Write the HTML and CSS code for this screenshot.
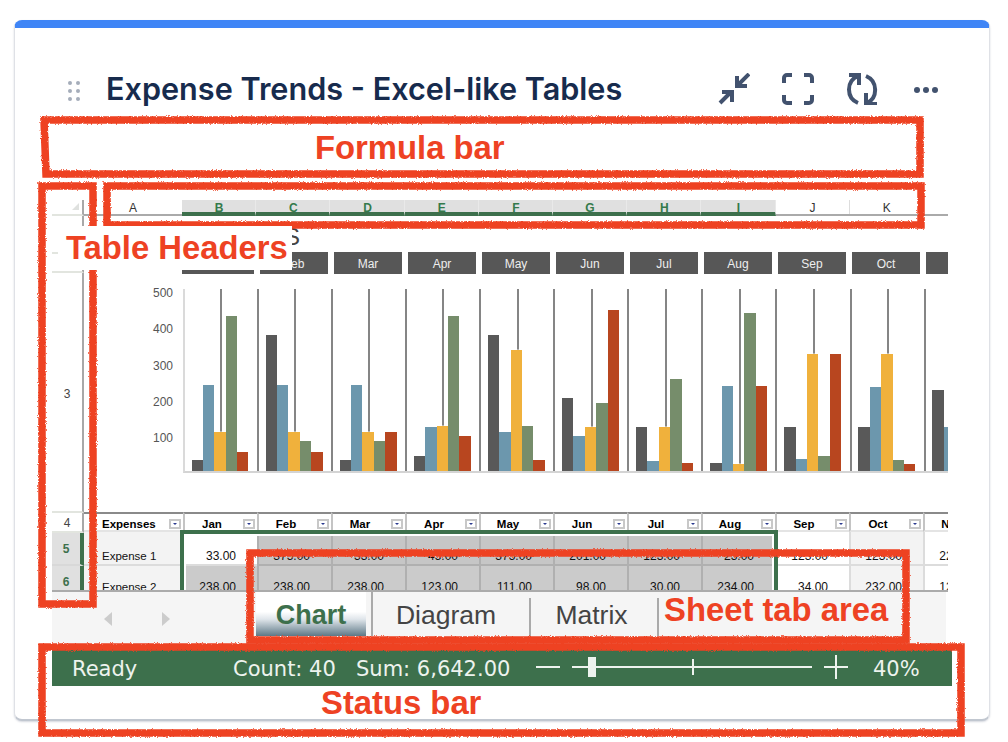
FILE: index.html
```html
<!DOCTYPE html>
<html lang="en">
<head>
<meta charset="utf-8">
<title>Expense Trends - Excel-like Tables</title>
<link rel="stylesheet" href="styles.css">
</head>
<body>
<main class="card">
  <header class="card-head">
    <svg class="handle" width="12" height="20" viewBox="0 0 12 20"><g fill="#a5adba"><circle cx="2" cy="2" r="2"/><circle cx="10" cy="2" r="2"/><circle cx="2" cy="10" r="2"/><circle cx="10" cy="10" r="2"/><circle cx="2" cy="18" r="2"/><circle cx="10" cy="18" r="2"/></g></svg>
    <h1 class="title">Expense Trends - Excel-like Tables</h1>
    <div class="tools">
      <svg class="tool" viewBox="0 0 32 32"><path d="M2 30L13 19M4 19H14V29M31 1L20 12M19 3V13H29"/></svg>
      <svg class="tool" viewBox="0 0 32 32"><path d="M2 10V5a3 3 0 0 1 3-3h5M22 2h5a3 3 0 0 1 3 3v5M30 22v5a3 3 0 0 1-3 3h-5M10 30H5a3 3 0 0 1-3-3v-5"/></svg>
      <svg class="tool" viewBox="0 0 32 32"><path d="M12 3C0 8 0 25 12 30M13 12V2H3M20 3C32 8 32 25 21 30M20 20V31H31"/></svg>
      <svg class="tool" viewBox="0 0 32 32"><g class="fill"><circle cx="7" cy="17" r="3"/><circle cx="16" cy="17" r="3"/><circle cx="25" cy="17" r="3"/></g></svg>
    </div>
  </header>
  <div class="formula-bar"></div>
  <section class="sheet">
    <div class="row-heads">
      <div class="rh rh-corner"><span class="corner-mark"></span></div>
      <div class="rh rh-1"></div>
      <div class="rh rh-2"></div>
      <div class="rh rh-3">3</div>
      <div class="rh rh-4">4</div>
      <div class="rh rh-sel rh-5">5</div>
      <div class="rh rh-sel rh-6">6</div>
    </div>
    <div class="cells">
      <div class="col-heads">
        <div class="ch ch-a">A</div>
        <div class="ch on">B</div><div class="ch on">C</div><div class="ch on">D</div><div class="ch on">E</div>
        <div class="ch on">F</div><div class="ch on">G</div><div class="ch on">H</div><div class="ch on">I</div>
        <div class="ch">J</div><div class="ch">K</div>
      </div>
      <div class="chart-title">S</div>
      <div class="months">
        <div class="month month-first">Jan</div><div class="month">Feb</div><div class="month">Mar</div><div class="month">Apr</div>
        <div class="month">May</div><div class="month">Jun</div><div class="month">Jul</div><div class="month">Aug</div>
        <div class="month">Sep</div><div class="month">Oct</div><div class="month">Nov</div>
      </div>
      <div class="chart">
        <div class="ticks"><span>500</span><span>400</span><span>300</span><span>200</span><span>100</span></div>
        <div class="plot">
          <div class="group"><i class="b k" style="height:11px"></i><i class="b u" style="height:86px"></i><i class="b o" style="height:39px"></i><i class="b g" style="height:155px"></i><i class="b r" style="height:19px"></i></div>
          <div class="group"><i class="b k" style="height:136px"></i><i class="b u" style="height:86px"></i><i class="b o" style="height:39px"></i><i class="b g" style="height:30px"></i><i class="b r" style="height:19px"></i></div>
          <div class="group"><i class="b k" style="height:11px"></i><i class="b u" style="height:86px"></i><i class="b o" style="height:39px"></i><i class="b g" style="height:30px"></i><i class="b r" style="height:39px"></i></div>
          <div class="group"><i class="b k" style="height:15px"></i><i class="b u" style="height:44px"></i><i class="b o" style="height:45px"></i><i class="b g" style="height:155px"></i><i class="b r" style="height:35px"></i></div>
          <div class="group"><i class="b k" style="height:136px"></i><i class="b u" style="height:39px"></i><i class="b o" style="height:121px"></i><i class="b g" style="height:45px"></i><i class="b r" style="height:11px"></i></div>
          <div class="group"><i class="b k" style="height:73px"></i><i class="b u" style="height:35px"></i><i class="b o" style="height:44px"></i><i class="b g" style="height:68px"></i><i class="b r" style="height:161px"></i></div>
          <div class="group"><i class="b k" style="height:44px"></i><i class="b u" style="height:10px"></i><i class="b o" style="height:44px"></i><i class="b g" style="height:92px"></i><i class="b r" style="height:8px"></i></div>
          <div class="group"><i class="b k" style="height:8px"></i><i class="b u" style="height:85px"></i><i class="b o" style="height:7px"></i><i class="b g" style="height:158px"></i><i class="b r" style="height:85px"></i></div>
          <div class="group"><i class="b k" style="height:44px"></i><i class="b u" style="height:12px"></i><i class="b o" style="height:117px"></i><i class="b g" style="height:15px"></i><i class="b r" style="height:117px"></i></div>
          <div class="group"><i class="b k" style="height:44px"></i><i class="b u" style="height:84px"></i><i class="b o" style="height:117px"></i><i class="b g" style="height:11px"></i><i class="b r" style="height:7px"></i></div>
          <div class="group"><i class="b k" style="height:81px"></i><i class="b u" style="height:44px"></i></div>
        </div>
      </div>
      <div class="table">
        <div class="th th-first"><span class="th-text">Expenses</span><span class="filter"></span></div>
        <div class="th"><span class="th-text">Jan</span><span class="filter"></span></div>
        <div class="th"><span class="th-text">Feb</span><span class="filter"></span></div>
        <div class="th"><span class="th-text">Mar</span><span class="filter"></span></div>
        <div class="th"><span class="th-text">Apr</span><span class="filter"></span></div>
        <div class="th"><span class="th-text">May</span><span class="filter"></span></div>
        <div class="th"><span class="th-text">Jun</span><span class="filter"></span></div>
        <div class="th"><span class="th-text">Jul</span><span class="filter"></span></div>
        <div class="th"><span class="th-text">Aug</span><span class="filter"></span></div>
        <div class="th"><span class="th-text">Sep</span><span class="filter"></span></div>
        <div class="th"><span class="th-text">Oct</span><span class="filter"></span></div>
        <div class="th"><span class="th-text">Nov</span><span class="filter"></span></div>

        <div class="td r5 name">Expense 1</div>
        <div class="td r5">33.00</div>
        <div class="td r5 sel">375.00</div><div class="td r5 sel">33.00</div><div class="td r5 sel">45.00</div><div class="td r5 sel">375.00</div>
        <div class="td r5 sel">201.00</div><div class="td r5 sel">123.00</div><div class="td r5 sel">23.00</div>
        <div class="td r5">123.00</div><div class="td r5 alt">123.00</div><div class="td r5">225.00</div>

        <div class="td r6 name">Expense 2</div>
        <div class="td r6 sel">238.00</div><div class="td r6 sel">238.00</div><div class="td r6 sel">238.00</div><div class="td r6 sel">123.00</div>
        <div class="td r6 sel">111.00</div><div class="td r6 sel">98.00</div><div class="td r6 sel">30.00</div><div class="td r6 sel">234.00</div>
        <div class="td r6">34.00</div><div class="td r6 alt">232.00</div><div class="td r6">125.00</div>

        <div class="selection"></div>
      </div>
    </div>
  </section>
  <nav class="tabbar">
    <div class="arrows"><span class="arrow arrow-l"></span><span class="arrow arrow-r"></span></div>
    <div class="tab tab-on">Chart</div>
    <div class="tab tab-diagram">Diagram</div>
    <div class="tab tab-matrix">Matrix</div>
  </nav>
  <footer class="status">
    <span class="st-ready">Ready</span>
    <span class="st-count">Count: 40</span>
    <span class="st-sum">Sum: 6,642.00</span>
    <span class="zoom-minus"></span>
    <span class="slider"><span class="slider-thumb"></span><span class="slider-tick"></span></span>
    <span class="zoom-plus"></span>
    <span class="st-zoom">40%</span>
  </footer>
</main>
<div class="notes">
  <svg class="scribble" width="1008" height="742" viewBox="0 0 1008 742">
    <defs>
      <filter id="rough" x="-5%" y="-5%" width="110%" height="110%">
        <feTurbulence type="fractalNoise" baseFrequency="1.2" numOctaves="2" seed="4"/>
        <feDisplacementMap in="SourceGraphic" scale="3"/>
      </filter>
    </defs>
    <g filter="url(#rough)" fill="none" stroke="#ee4223" stroke-width="7.5">
      <path d="M44 120H920V174H46Z"/>
      <path d="M107 186H921V225H107Z"/>
      <path d="M42 186H93V604H42Z"/>
      <path d="M250 553H906V640H250Z"/>
      <path d="M42 647H961V733H42Z"/>
    </g>
  </svg>
  <span class="note note-formula">Formula bar</span>
  <span class="note note-table">Table Headers</span>
  <span class="note note-tabs">Sheet tab area</span>
  <span class="note note-status">Status bar</span>
</div>
</body>
</html>
```
FILE: styles.css
```css
* { box-sizing: border-box; }
html, body { margin: 0; padding: 0; }
body {
  width: 1008px;
  height: 742px;
  overflow: hidden;
  position: relative;
  background: #fff;
  font-family: "Liberation Sans", Arial, sans-serif;
}
.card {
  width: 976px;
  height: 701px;
  margin: 20px 0 0 14px;
  background: #fff;
  border: 1px solid #dfe1e6;
  border-top: 8px solid #3f85f6;
  border-bottom: 2px solid #c1c7d0;
  border-radius: 8px;
  box-shadow: 0 1px 2px rgba(9, 30, 66, .18);
}
.card-head {
  height: 34px;
  margin-top: 44px;
  padding: 0 47px 0 53px;
  display: flex;
  align-items: center;
}
.handle { flex: none; margin-top: 4px; }
.title {
  margin: 0 0 0 26px;
  font: 600 30.6px/34px Inter, sans-serif;
  color: #172b4d;
  white-space: nowrap;
}
.tools { margin-left: auto; display: flex; gap: 32px; }
.tool {
  width: 32px;
  height: 32px;
  fill: none;
  stroke: #42526e;
  stroke-width: 4;
  stroke-linejoin: miter;
}
.tool .fill { fill: #42526e; stroke: none; }
.formula-bar { height: 94px; }

.sheet {
  width: 896px;
  height: 390px;
  margin-left: 37px;
  display: flex;
  overflow: hidden;
  color: #222;
  font-size: 12px;
}
.row-heads { flex: none; width: 32px; display: flex; flex-direction: column; }
.rh {
  flex: none;
  border-right: 2px solid #a8a8a8;
  border-bottom: 2px solid #e2e5df;
  display: flex;
  align-items: center;
  justify-content: center;
  color: #444;
}
.rh-corner { height: 16px; position: relative; }
.corner-mark {
  position: absolute;
  right: 3px;
  top: 3px;
  border-style: solid;
  border-width: 0 0 7px 7px;
  border-color: transparent transparent #dfe1df transparent;
}
.rh-1 { height: 38px; }
.rh-2 { height: 19px; }
.rh-3 { height: 240px; padding-top: 3px; }
.rh-4 { height: 20px; padding-top: 2px; }
.rh-sel {
  background: #e0e0e0;
  border-right: 4px solid #3d704c;
  color: #3d704c;
  font-weight: 700;
}
.rh-5 { height: 33px; border-bottom-color: #d8d8d8; }
.rh-6 { height: 30px; align-items: flex-start; padding-top: 9px; border-bottom: 0; }

.cells { width: 864px; flex: none; overflow: hidden; }
.col-heads { height: 16px; display: flex; border-bottom: 2px solid #aaa; }
.ch {
  flex: none;
  width: 74.2px;
  height: 14px;
  padding-left: 1px;
  line-height: 16px;
  text-align: center;
  font-size: 12px;
  color: #333;
  border-right: 1px solid #ddd;
}
.ch-a { width: 98px; border-right: 0; padding-left: 0; }
.ch.on {
  height: 16px;
  background: #e0e0e0;
  color: #347a4b;
  border-bottom: 4px solid #3d704c;
  border-right: 1px solid #e9e9e9;
  font-weight: 700;
  line-height: 16px;
}
.chart-title {
  height: 36px;
  padding-left: 200px;
  font-size: 24px;
  line-height: 41px;
  color: #444;
}
.months { height: 22px; display: flex; gap: 6px; padding-left: 98px; }
.month {
  flex: none;
  width: 68px;
  background: #575757;
  color: #eee;
  font-size: 12px;
  line-height: 24px;
  text-align: center;
}
.month-first { width: 72px; }
.chart { height: 238px; display: flex; align-items: flex-start; }
.ticks {
  flex: none;
  width: 99px;
  display: flex;
  flex-direction: column;
  padding: 1px 10px 0 0;
  text-align: right;
  font-size: 12px;
  color: #555;
}
.ticks span { height: 36.3px; line-height: 36.3px; }
.plot {
  flex: none;
  width: 900px;
  height: 184px;
  margin-top: 15px;
  display: flex;
  border-left: 2px solid #dadada;
  border-bottom: 2px solid #d4d4d4;
}
.group {
  flex: none;
  width: 74.1px;
  height: 182px;
  padding-left: 6.5px;
  display: flex;
  align-items: flex-end;
  background:
    linear-gradient(#858585, #858585) 35.2px 0 / 2px 100% no-repeat,
    linear-gradient(#858585, #858585) 71.8px 0 / 2px 100% no-repeat;
}
.b { display: block; flex: none; width: 11.4px; box-shadow: 1px 0 0 rgba(255, 255, 255, .25), 0 -1px 0 rgba(255, 255, 255, .4); }
.k { background: #595959; }
.u { background: #6c97ad; }
.o { background: #f0b13c; }
.g { background: #768d6b; }
.r { background: #b8461f; }

.table {
  position: relative;
  display: grid;
  grid-template-columns: 99px repeat(11, 74px);
  grid-template-rows: 20px 34px 30px;
  width: 913px;
  font-size: 11.5px;
}
.th {
  border-top: 2px solid #8a8a8a;
  border-left: 2px solid #c4c4c4;
  border-bottom: 2px solid #e4e4e4;
  padding-top: 3px;
  display: flex;
  align-items: center;
  font-weight: 700;
  color: #000;
}
.th-first { border-left: 0; padding-left: 18px; }
.th-text { flex: 1; padding-right: 4px; text-align: center; }
.th-first .th-text { text-align: left; }
.filter {
  flex: none;
  width: 12px;
  height: 10px;
  margin-right: 2px;
  background: #fff;
  border: 2px solid #c8c8c8;
  position: relative;
}
.filter::after {
  content: "";
  position: absolute;
  left: 2px;
  top: 2px;
  border-style: solid;
  border-width: 2px 2px 0 2px;
  border-color: #2b3a8f transparent transparent transparent;
}
.td {
  border-left: 2px solid #dcdcdc;
  padding-right: 21px;
  text-align: right;
  font-size: 12px;
  line-height: 14px;
  color: #111;
  white-space: nowrap;
}
.r5 { padding-top: 17px; border-bottom: 2px solid #dcdcdc; }
.r6 { padding-top: 14px; }
.name {
  border-left: 0;
  background: #f3f3f3;
  padding: 0 0 0 18px;
  text-align: left;
  font-size: 11.5px;
}
.r5.name { padding-top: 17px; }
.r6.name { padding-top: 14px; }
.alt { background: #f3f3f3; }
.sel { background: #cbcbcb; border-left-color: #b0b0b0; border-bottom-color: #b0b0b0; }
.r5.sel { background: #c6c6c6; }
.selection {
  position: absolute;
  left: 96px;
  top: 18px;
  width: 598px;
  height: 120px;
  border: 4px solid #3d704c;
  box-shadow: inset 0 0 0 2px #fff;
}

.tabbar {
  width: 896px;
  height: 58px;
  margin-left: 37px;
  display: flex;
  align-items: flex-start;
  background: linear-gradient(#f5f5f5, #f5f5f5) 0 0 / 894px 100% no-repeat;
  border-top: 2px solid #ababab;
}
.arrows { flex: none; width: 204px; padding: 20px 0 0 52px; display: flex; gap: 50px; }
.arrow { width: 0; height: 0; border-style: solid; border-color: transparent; }
.arrow-l { border-width: 7px 8px 7px 0; border-right-color: #ccc; }
.arrow-r { border-width: 7px 0 7px 8px; border-left-color: #ccc; }
.tab {
  flex: none;
  height: 44px;
  line-height: 46px;
  text-align: center;
  font-size: 26.5px;
  color: #444;
}
.tab-on {
  width: 110px;
  margin-right: 5px;
  color: #3d704c;
  font-weight: 700;
  font-size: 27px;
  background: linear-gradient(#fff 0, #fff 45%, #dfe5ea 62%, #5d7886 100%);
}
.tab-diagram { width: 158px; padding-right: 10px; border-left: 2px solid #aaa; }
.tab-matrix {
  width: 130px;
  height: 38px;
  margin-top: 6px;
  padding-right: 5px;
  line-height: 34px;
  border-left: 2px solid #aaa;
  border-right: 2px solid #aaa;
}

.status {
  width: 900px;
  height: 38px;
  margin-left: 37px;
  background: #3d704c;
  color: #edf3ee;
  display: flex;
  align-items: center;
  font-family: "DejaVu Sans", sans-serif;
  font-size: 21px;
}
.st-ready, .st-count, .st-sum, .st-zoom { position: relative; top: 2px; }
.st-ready { flex: none; width: 181px; padding-left: 20px; }
.st-count { flex: none; width: 123px; }
.st-sum { flex: none; width: 180px; }
.zoom-minus { flex: none; width: 24px; height: 2px; margin-right: 12px; background: #edf3ee; }
.slider { flex: none; width: 240px; height: 2px; margin-right: 12px; background: #edf3ee; position: relative; }
.slider-thumb { position: absolute; left: 16px; top: -9px; width: 8px; height: 20px; background: #edf3ee; }
.slider-tick { position: absolute; left: 120px; top: -7px; width: 2px; height: 16px; background: #edf3ee; }
.zoom-plus {
  flex: none;
  width: 24px;
  height: 24px;
  margin-right: 25px;
  background:
    linear-gradient(#edf3ee, #edf3ee) center / 100% 2px no-repeat,
    linear-gradient(#edf3ee, #edf3ee) center / 2px 100% no-repeat;
}
.st-zoom { flex: none; }

.notes { position: absolute; left: 0; top: 0; width: 1008px; height: 742px; pointer-events: none; }
.scribble { position: absolute; left: 0; top: 0; }
.note {
  position: absolute;
  font-weight: 700;
  font-size: 32.8px;
  line-height: 38px;
  color: #ee4223;
  white-space: nowrap;
}
.note-formula { left: 315px; top: 129px; }
.note-table { left: 58px; top: 226px; padding: 3px 4px 3px 8px; background: #fff; }
.note-tabs { left: 664px; top: 591px; }
.note-status { left: 321px; top: 684px; }
```
